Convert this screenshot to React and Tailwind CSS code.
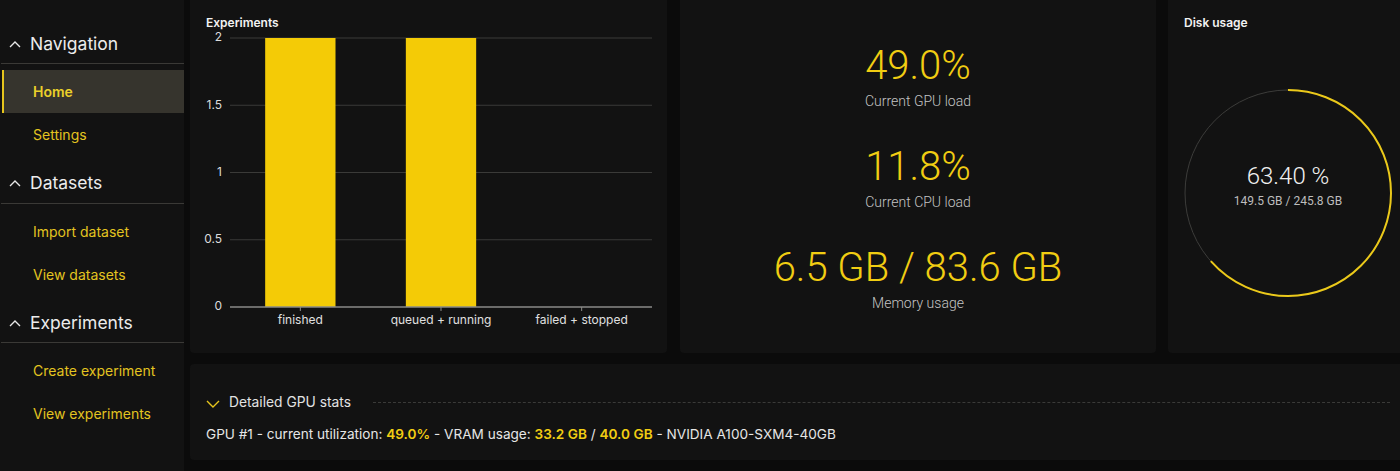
import React from "react";

const inter = { fontFamily: "Inter, 'Noto Sans', sans-serif" };

function ChevUp() {
  return (
    <svg width="12" height="8" viewBox="0 0 12 8" className="shrink-0">
      <polyline points="1,7 6,2 11,7" fill="none" stroke="#e8e8e8" strokeWidth="1.4" />
    </svg>
  );
}

function Section({ title, items, active }) {
  return (
    <div className="flex flex-col">
      <div className="h-[40px] flex items-center gap-[9px] pl-2 border-b border-[#3a3936] ml-[1px]">
        <ChevUp />
        <span className="text-[17.5px] text-[#ececec] leading-none">{title}</span>
      </div>
      <div className="flex flex-col pt-[6px] pb-[7.5px]">
        {items.map((it) => (
          <div
            key={it}
            className={
              it === active
                ? "h-[43px] flex items-center ml-[2px] border-l-2 border-[#e6c51d] bg-[#36342d] pl-[29px] text-[14px] font-semibold text-[#ead02a]"
                : "h-[43px] flex items-center pl-[33px] text-[14px] text-[#e3c420]"
            }
          >
            {it}
          </div>
        ))}
      </div>
    </div>
  );
}

function Chart() {
  const x0 = 40;
  const x1 = 462;
  const cw = (x1 - x0) / 3;
  const ys = [7, 74.25, 141.5, 208.75, 276];
  const labels = ["2", "1.5", "1", "0.5", "0"];
  const cats = ["finished", "queued + running", "failed + stopped"];
  const vals = [2, 2, 0];
  return (
    <svg width="477" height="323" className="block overflow-visible" style={{ fontFamily: "Inter, sans-serif" }}>
      {ys.slice(0, 4).map((y, i) => (
        <line key={i} x1={x0} x2={x1} y1={y} y2={y} stroke="#3a3a38" strokeWidth="1" />
      ))}
      {ys.map((y, i) => (
        <text key={i} x="32" y={y} textAnchor="end" dominantBaseline="middle" fontSize="12" fill="#dcdcdc">
          {labels[i]}
        </text>
      ))}
      {vals.map((v, i) =>
        v > 0 ? (
          <rect key={i} x={x0 + i * cw + cw / 4} y={7} width={cw / 2} height={276 - 7} fill="#f4cb06" />
        ) : null
      )}
      <line x1={x0} x2={x1} y1={276} y2={276} stroke="#8a8a88" strokeWidth="1.5" />
      {cats.map((c, i) => (
        <g key={c}>
          <line x1={x0 + i * cw + cw / 2} x2={x0 + i * cw + cw / 2} y1={276} y2={280} stroke="#8a8a88" strokeWidth="1" />
          <text x={x0 + i * cw + cw / 2} y={290} textAnchor="middle" dominantBaseline="middle" fontSize="12" fill="#e0e0e0">
            {c}
          </text>
        </g>
      ))}
    </svg>
  );
}

function Stat({ value, label }) {
  return (
    <div className="flex flex-col items-center gap-[1px]">
      <div className="text-[40px] leading-[48px] font-light text-[#f1cd12]" style={{ fontFamily: "Roboto, sans-serif" }}>
        {value}
      </div>
      <div className="text-[14px] leading-5 font-light text-[#c4c4c4]" style={{ fontFamily: "Roboto, sans-serif" }}>
        {label}
      </div>
    </div>
  );
}

function Donut() {
  const r = 103;
  const c = 2 * Math.PI * r;
  const pct = 0.634;
  return (
    <svg width="210" height="210" viewBox="0 0 210 210" className="block">
      <circle cx="105" cy="105" r={r} fill="none" stroke="#3c3c3a" strokeWidth="1" />
      <circle
        cx="105"
        cy="105"
        r={r}
        fill="none"
        stroke="#ebc91a"
        strokeWidth="2"
        strokeDasharray={`${c * pct} ${c}`}
        transform="rotate(-90 105 105)"
      />
      <text x="105" y="90" textAnchor="middle" dominantBaseline="middle" fontSize="24" fontWeight="300" fill="#f0f0f0" style={{ fontFamily: "Roboto, sans-serif" }}>
        63.40 %
      </text>
      <text x="105" y="114" textAnchor="middle" dominantBaseline="middle" fontSize="12" fill="#bdbdbd" style={{ fontFamily: "Roboto, sans-serif" }}>
        149.5 GB / 245.8 GB
      </text>
    </svg>
  );
}

export default function App() {
  return (
    <div className="w-[1400px] h-[471px] overflow-hidden bg-[#0b0b0b] flex" style={inter}>
      <aside className="w-[184px] shrink-0 h-full bg-[#121212] pt-[24px] flex flex-col">
        <Section title="Navigation" items={["Home", "Settings"]} active="Home" />
        <Section title="Datasets" items={["Import dataset", "View datasets"]} />
        <Section title="Experiments" items={["Create experiment", "View experiments"]} />
      </aside>
      <main className="flex flex-col pl-[6px] -mt-[8px] gap-[11px] shrink-0">
        <div className="flex">
          <section className="w-[477px] h-[361px] rounded bg-[#121212] flex flex-col">
            <div className="pt-[23px] pl-4 text-xs leading-4 font-semibold text-[#f2f2f2]">Experiments</div>
            <Chart />
          </section>
          <section className="w-[476px] h-[361px] ml-[13px] rounded bg-[#121212] flex flex-col items-center pt-[50px] gap-[32px]">
            <Stat value="49.0%" label="Current GPU load" />
            <Stat value="11.8%" label="Current CPU load" />
            <Stat value="6.5 GB / 83.6 GB" label="Memory usage" />
          </section>
          <section className="w-[240px] h-[361px] ml-[12px] rounded bg-[#121212] flex flex-col">
            <div className="pt-[23px] pl-4 text-xs leading-4 font-semibold text-[#f2f2f2]">Disk usage</div>
            <div className="mt-[57px] flex justify-center">
              <Donut />
            </div>
          </section>
        </div>
        <section className="w-[1218px] h-[96px] rounded bg-[#121212] pt-[28px] pl-4 pr-[18px] flex flex-col">
          <div className="h-5 flex items-center">
            <svg width="14" height="8" viewBox="0 0 14 8" className="shrink-0 mt-[4px]">
              <polyline points="1,1 7,7 13,1" fill="none" stroke="#e6c51d" strokeWidth="1.4" />
            </svg>
            <span className="ml-[9px] text-[13.8px] text-[#e2e2e2]">Detailed GPU stats</span>
            <div className="flex-1 ml-[22px] border-t border-dashed border-[#3a3a38]" />
          </div>
          <div className="mt-[12px] h-5 flex items-center text-[13.6px] text-[#e6e6e6] whitespace-pre">
            <span>GPU #1 - current utilization: </span>
            <span className="font-semibold text-[#f1cd12]">49.0%</span>
            <span> - VRAM usage: </span>
            <span className="font-semibold text-[#f1cd12]">33.2 GB</span>
            <span> / </span>
            <span className="font-semibold text-[#f1cd12]">40.0 GB</span>
            <span> - NVIDIA A100-SXM4-40GB</span>
          </div>
        </section>
      </main>
    </div>
  );
}
